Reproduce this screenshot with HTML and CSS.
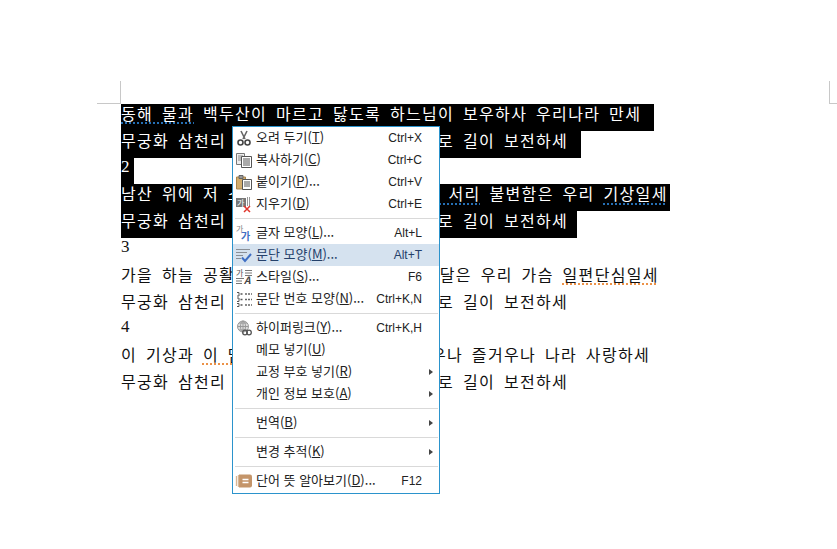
FILE: index.html
```html
<!DOCTYPE html>
<html lang="ko">
  <head>
    <meta charset="UTF-8" />
    <title>문서</title>
    <link rel="stylesheet" href="styles.css">
  </head>
  <body>
    <div class="marks">
      <div class="mark mark-left"></div>
      <div class="mark mark-right"></div>
    </div>

    <div class="doc">
      <div class="line sel"><span class="sq-blue">동해 물과</span> 백두산이 마르고 닳도록 하느님이 보우하사 우리나라 만세</div>
      <div class="line sel">무궁화 삼천리 화려강산 대한 사람 대한으로 길이 보전하세</div>
      <div class="line sel num">2</div>
      <div class="line sel tail-min">남산 위에 저 소나무 철갑을 두른 듯 바람<span class="sq-blue"> 서리</span> 불변함은 우리 <span class="sq-blue">기상일세</span></div>
      <div class="line sel tail-short">무궁화 삼천리 화려강산 대한 사람 대한으로 길이 보전하세</div>
      <div class="line num">3</div>
      <div class="line">가을 하늘 공활한데 높고 구름 없이 밝은 달은 우리 가슴 <span class="sq-orange">일편단심일세</span></div>
      <div class="line">무궁화 삼천리 화려강산 대한 사람 대한으로 길이 보전하세</div>
      <div class="line num">4</div>
      <div class="line">이 기상과 <span class="sq-orange">이 맘</span>으로 충성을 다하여 괴로우나 즐거우나 나라 사랑하세</div>
      <div class="line">무궁화 삼천리 화려강산 대한 사람 대한으로 길이 보전하세</div>
    </div>

    <div class="menu">
      <div class="item">
        <svg class="icon" viewBox="0 0 16 16"><path d="M5 1l4 8M11 1L7 9" fill="none" stroke="#666" stroke-width="1.6"/><circle cx="4.5" cy="12.5" r="2.500" fill="none" stroke="#444" stroke-width="1.6"/><circle cx="11.5" cy="12.5" r="2.500" fill="none" stroke="#444" stroke-width="1.6"/></svg>
        <span class="label">오려 두기(<u>T</u>)</span><span class="key">Ctrl+X</span>
      </div>
      <div class="item">
        <svg class="icon" viewBox="0 0 16 16"><path d="M.5 1.500h8v11h-8z" fill="#eee" stroke="#777"/><path d="M2 4h5M2 6h5M2 8h5" stroke="#888"/><path d="M5.500 4.500h10v11h-10z" fill="#fff" stroke="#555"/><path d="M7 7h7M7 9h7M7 11h7M7 13h7" stroke="#555"/></svg>
        <span class="label">복사하기(<u>C</u>)</span><span class="key">Ctrl+C</span>
      </div>
      <div class="item">
        <svg class="icon" viewBox="0 0 16 16"><path d="M.5 3h9v12h-9z" fill="#d2ac6c" stroke="#a8854c"/><path d="M3 1.500h4v3H3z" fill="#999" stroke="#666"/><path d="M6.500 5.500h9v10h-9z" fill="#fff" stroke="#555"/><path d="M8 8h6M8 10h6M8 12h6" stroke="#555"/></svg>
        <span class="label">붙이기(<u>P</u>)...</span><span class="key">Ctrl+V</span>
      </div>
      <div class="item">
        <svg class="icon" viewBox="0 0 16 16"><path d="M0 2h10v9H0z" fill="#777"/><text x="1" y="9.500" class="icon-text" fill="#fff">가</text><path d="M11.500 1v9M13.500 1v9" stroke="#999"/><path d="M8 10l6 6M14 10l-6 6" stroke="#e0352b" stroke-width="1.500"/></svg>
        <span class="label">지우기(<u>D</u>)</span><span class="key">Ctrl+E</span>
      </div>
      <div class="sep"></div>
      <div class="item">
        <svg class="icon" viewBox="0 0 16 16"><text x="0" y="7" class="icon-text" fill="#888">가</text><text x="5" y="15" class="icon-text-big" fill="#3f6fc4">가</text></svg>
        <span class="label">글자 모양(<u>L</u>)...</span><span class="key">Alt+L</span>
      </div>
      <div class="item active">
        <svg class="icon" viewBox="0 0 16 16"><path d="M0 2.500h14M0 5.500h11M0 8.500h7M0 11.500h5" stroke="#8a8f96"/><path d="M6 10.500l3 3.500 6-7" fill="none" stroke="#3f6fc4" stroke-width="2"/></svg>
        <span class="label">문단 모양(<u>M</u>)...</span><span class="key">Alt+T</span>
      </div>
      <div class="item">
        <svg class="icon" viewBox="0 0 16 16"><text x="0" y="7" class="icon-text" fill="#555">가</text><path d="M9 1.500h7M9 4h7M9 6.500h7M0 9.500h8M0 12h6M0 14.500h6" stroke="#777"/><text x="8" y="15" class="icon-text-big" fill="#444" font-style="italic">A</text></svg>
        <span class="label">스타일(<u>S</u>)...</span><span class="key">F6</span>
      </div>
      <div class="item">
        <svg class="icon" viewBox="0 0 16 16"><path d="M1 1.500h2v3.500H1M1 7h2v3.500H1M1 12.500h2v3H1" fill="none" stroke="#555"/><path d="M4.500 3h2M4.500 8.500h2M4.500 14h2" stroke="#555" stroke-width="1.500"/><path d="M9 3h7M9 8.500h7M9 14h7" stroke="#666" stroke-width="1.500" stroke-dasharray="2 1"/></svg>
        <span class="label">문단 번호 모양(<u>N</u>)...</span><span class="key">Ctrl+K,N</span>
      </div>
      <div class="sep"></div>
      <div class="item">
        <svg class="icon" viewBox="0 0 16 16"><circle cx="7" cy="6.500" r="5.500" fill="#ddd" stroke="#999"/><path d="M1.500 6.500h11M7 1v11M3 3h8M3 10h8" stroke="#999"/><ellipse cx="7" cy="6.500" rx="2.500" ry="5.500" fill="none" stroke="#999"/><circle cx="9" cy="12.500" r="2.300" fill="none" stroke="#555" stroke-width="1.300"/><circle cx="13" cy="12.500" r="2.300" fill="none" stroke="#555" stroke-width="1.300"/></svg>
        <span class="label">하이퍼링크(<u>Y</u>)...</span><span class="key">Ctrl+K,H</span>
      </div>
      <div class="item"><span class="noicon"></span><span class="label">메모 넣기(<u>U</u>)</span></div>
      <div class="item"><span class="noicon"></span><span class="label">교정 부호 넣기(<u>R</u>)</span><span class="arrow"></span></div>
      <div class="item"><span class="noicon"></span><span class="label">개인 정보 보호(<u>A</u>)</span><span class="arrow"></span></div>
      <div class="sep"></div>
      <div class="item"><span class="noicon"></span><span class="label">번역(<u>B</u>)</span><span class="arrow"></span></div>
      <div class="sep"></div>
      <div class="item"><span class="noicon"></span><span class="label">변경 추적(<u>K</u>)</span><span class="arrow"></span></div>
      <div class="sep"></div>
      <div class="item">
        <svg class="icon" viewBox="0 0 16 16"><path d="M3 1.500h11a2 2 0 0 1 2 2v9a2 2 0 0 1-2 2H3z" fill="#c4956a"/><path d="M.5 3v10M2.500 2v12" stroke="#d8b796" stroke-width="1.300"/><path d="M6.500 6.500h6M6.500 9.500h6" stroke="#fff" stroke-width="1.500"/></svg>
        <span class="label">단어 뜻 알아보기(<u>D</u>)...</span><span class="key">F12</span>
      </div>
    </div>
  </body>
</html>
```

FILE: styles.css
```css
html, body {
  margin: 0;
  padding: 0;
}
body {
  position: relative;
  width: 837px;
  height: 549px;
  overflow: hidden;
  background: #fff;
  color: #111;
  font-family: "Noto Sans CJK KR", "Noto Sans", sans-serif;
}
.marks {
  display: flex;
  justify-content: space-between;
  padding: 81px 0 0 97px;
}
.mark {
  height: 22px;
  border-bottom: 1px solid #c8c8c8;
}
.mark-left {
  width: 23px;
  border-right: 1px solid #c8c8c8;
}
.mark-right {
  width: 7px;
  border-left: 1px solid #c8c8c8;
}
.doc {
  padding-left: 121px;
  font-size: 16px;
  letter-spacing: 1.34px;
  word-spacing: 3px;
}
.line {
  height: 26.8px;
  line-height: 18px;
  width: fit-content;
  white-space: nowrap;
}
.sel {
  padding-right: 13px;
  background: #000;
  color: #fff;
}
.tail-short {
  padding-right: 9px;
}
.tail-min {
  padding-right: 2px;
}
.num {
  font-family: "Liberation Serif", serif;
  font-size: 17px;
  letter-spacing: 0;
}
.sel.num {
  padding-right: 4px;
}
.sq-blue {
  text-decoration: underline dotted #2f8be0;
  text-underline-offset: 3px;
}
.sq-orange {
  text-decoration: underline dotted #e8781c;
  text-underline-offset: 3px;
}
.menu {
  position: absolute;
  left: 232px;
  top: 126px;
  width: 206px;
  padding-bottom: 1px;
  background: #fff;
  border: 1px solid #2b93cc;
  color: #222;
  font-size: 13px;
}
.item {
  display: flex;
  align-items: center;
  height: 22px;
  padding-left: 3px;
}
.item.active {
  background: #d5e2ef;
  color: #24406a;
}
.icon {
  flex: none;
  width: 16px;
  height: 16px;
  margin-right: 4px;
  overflow: visible;
}
.icon-text {
  font-size: 8px;
}
.icon-text-big {
  font-size: 10px;
  font-weight: 700;
}
.noicon {
  flex: none;
  width: 20px;
}
.label {
  flex: 1;
  line-height: 18px;
  padding-bottom: 2px;
  white-space: nowrap;
}
.key {
  padding-right: 17px;
  font-family: "Liberation Sans", sans-serif;
  font-size: 12px;
}
.arrow {
  width: 0;
  height: 0;
  margin-right: 6px;
  border-left: 4px solid #444;
  border-top: 3px solid transparent;
  border-bottom: 3px solid transparent;
}
.sep {
  height: 1px;
  margin: 3px 1px 3px 2px;
  background: #d9d9d9;
}
```
